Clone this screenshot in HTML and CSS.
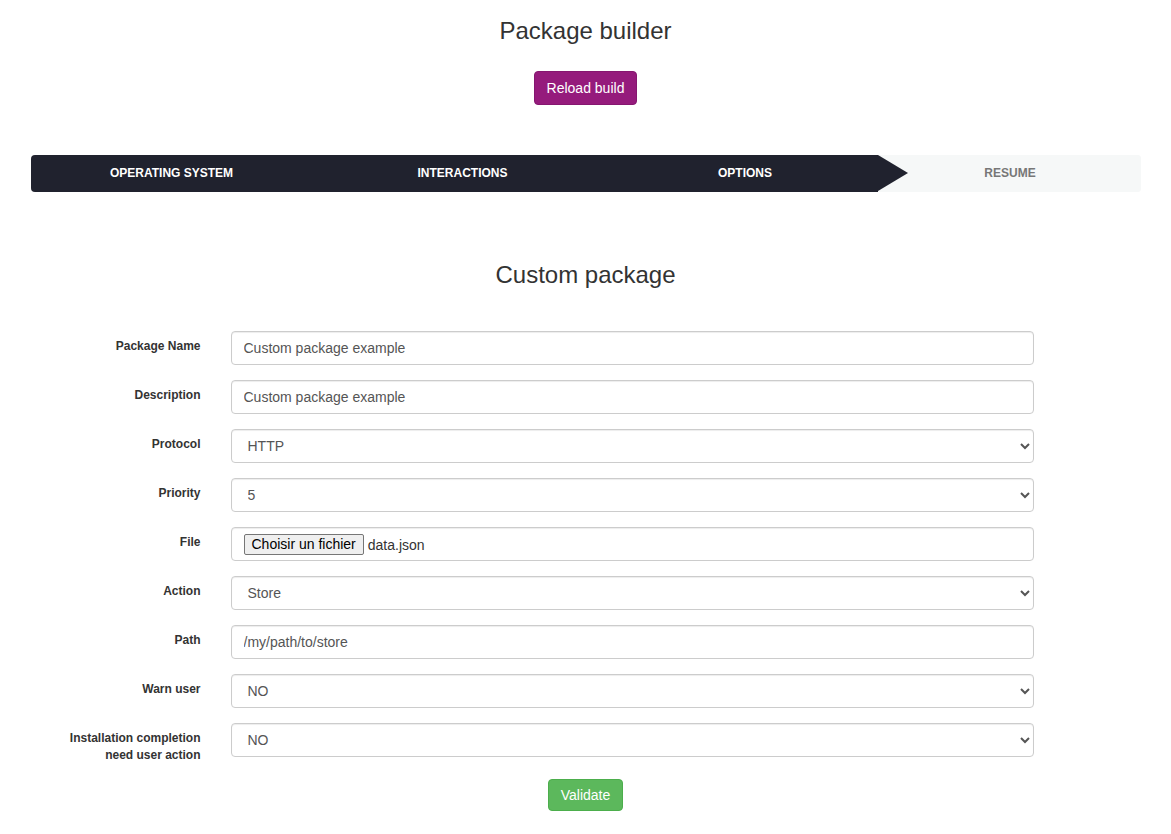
FILE: index.html
```html
<!DOCTYPE html>
<html lang="fr">
<head>
<meta charset="utf-8">
<title>Package builder</title>
<link rel="stylesheet" href="styles.css">
</head>
<body>
<div class="container">
  <h3 class="title">Package builder</h3>
  <div class="center">
    <button class="btn btn-purple" type="button">Reload build</button>
  </div>

  <div class="stepper">
    <div class="step s1">OPERATING SYSTEM</div>
    <div class="step s2">INTERACTIONS</div>
    <div class="step s3">OPTIONS</div>
    <div class="step s4">RESUME</div>
  </div>

  <h3 class="subtitle">Custom package</h3>

  <form class="form">
    <div class="row">
      <label class="lbl">Package Name</label>
      <div class="ctl"><input class="field" type="text" value="Custom package example"></div>
    </div>
    <div class="row">
      <label class="lbl">Description</label>
      <div class="ctl"><input class="field" type="text" value="Custom package example"></div>
    </div>
    <div class="row">
      <label class="lbl">Protocol</label>
      <div class="ctl"><select class="field sel"><option>HTTP</option></select></div>
    </div>
    <div class="row">
      <label class="lbl">Priority</label>
      <div class="ctl"><select class="field sel"><option>5</option></select></div>
    </div>
    <div class="row">
      <label class="lbl">File</label>
      <div class="ctl"><div class="field file"><span class="filebtn">Choisir un fichier</span><span class="filename">data.json</span></div></div>
    </div>
    <div class="row">
      <label class="lbl">Action</label>
      <div class="ctl"><select class="field sel"><option>Store</option></select></div>
    </div>
    <div class="row">
      <label class="lbl">Path</label>
      <div class="ctl"><input class="field" type="text" value="/my/path/to/store"></div>
    </div>
    <div class="row">
      <label class="lbl">Warn user</label>
      <div class="ctl"><select class="field sel"><option>NO</option></select></div>
    </div>
    <div class="row">
      <label class="lbl">Installation completion need user action</label>
      <div class="ctl"><select class="field sel"><option>NO</option></select></div>
    </div>
    <div class="center actions">
      <button class="btn btn-green" type="button">Validate</button>
    </div>
  </form>
</div>
</body>
</html>
```

FILE: styles.css
```css
html, body {
  margin: 0;
  padding: 0;
  background: #fff;
}
body {
  font-family: "Liberation Sans", Arial, Helvetica, sans-serif;
  font-size: 14px;
  line-height: 1.42857;
  color: #333;
}
.container {
  width: 1110px;
  margin: 0 auto;
  padding: 0 15px;
  box-sizing: content-box;
}
.title {
  margin: 17px 0 0;
  font-size: 24px;
  font-weight: 500;
  line-height: 28px;
  text-align: center;
}
.center {
  display: flex;
  justify-content: center;
}
.btn {
  font-family: inherit;
  font-size: 14px;
  line-height: 20px;
  color: #fff;
  border: 1px solid transparent;
  border-radius: 4px;
  cursor: pointer;
}
.btn-purple {
  margin-top: 26px;
  height: 34px;
  padding: 6px 12px;
  background: #951b7c;
  border-color: #861670;
}
.stepper {
  margin-top: 50px;
  display: grid;
  grid-template-columns: 280px 302px 265px 1fr;
  height: 37px;
  border-radius: 4px;
  overflow: hidden;
  background: #f6f8f8;
}
.step {
  display: flex;
  align-items: center;
  justify-content: center;
  font-size: 12px;
  font-weight: 700;
  color: #fff;
  background: #20222e;
}
.s1 {
  padding-left: 2px;
}
.s2 {
  padding-left: 2px;
}
.s3 {
  position: relative;
}
.s3::after {
  content: "";
  position: absolute;
  top: 0;
  left: 100%;
  width: 0;
  height: 0;
  border-top: 18.5px solid transparent;
  border-bottom: 18.5px solid transparent;
  border-left: 30px solid #20222e;
}
.s4 {
  background: #f6f8f8;
  color: #777;
  padding-left: 2px;
}
.subtitle {
  margin: 70px 0 0;
  font-size: 24px;
  font-weight: 500;
  line-height: 26px;
  text-align: center;
}
.form {
  margin-top: 43px;
}
.row {
  display: flex;
  margin-bottom: 15px;
}
.lbl {
  box-sizing: border-box;
  width: 185px;
  padding: 7px 15px 0 15px;
  text-align: right;
  font-size: 12px;
  font-weight: 700;
  line-height: 17px;
  color: #333;
}
.ctl {
  box-sizing: border-box;
  width: 818px;
  padding-left: 15px;
}
.field {
  display: block;
  box-sizing: border-box;
  width: 803px;
  height: 34px;
  padding: 6px 12px;
  font-family: inherit;
  font-size: 14px;
  line-height: 20px;
  color: #555;
  background: #fff;
  border: 1px solid #ccc;
  border-radius: 4px;
  box-shadow: inset 0 1px 1px rgba(0,0,0,.075);
  outline: none;
}
.sel {
  padding: 6px 8px 6px 12px;
}
.file {
  display: flex;
  align-items: center;
  padding: 1px 12px 0;
  color: #333;
}
.filebtn {
  display: inline-block;
  height: 21px;
  box-sizing: border-box;
  padding: 0 7px;
  line-height: 19px;
  font-size: 14px;
  color: #000;
  background: #efefef;
  border: 1px solid #767676;
  border-radius: 2px;
}
.filename {
  margin-left: 4px;
  font-size: 14px;
  color: #333;
}
.actions {
  margin-top: 0;
}
.btn-green {
  height: 32px;
  padding: 5px 12px;
  background: #5cb85c;
  border-color: #4cae4c;
}
```
